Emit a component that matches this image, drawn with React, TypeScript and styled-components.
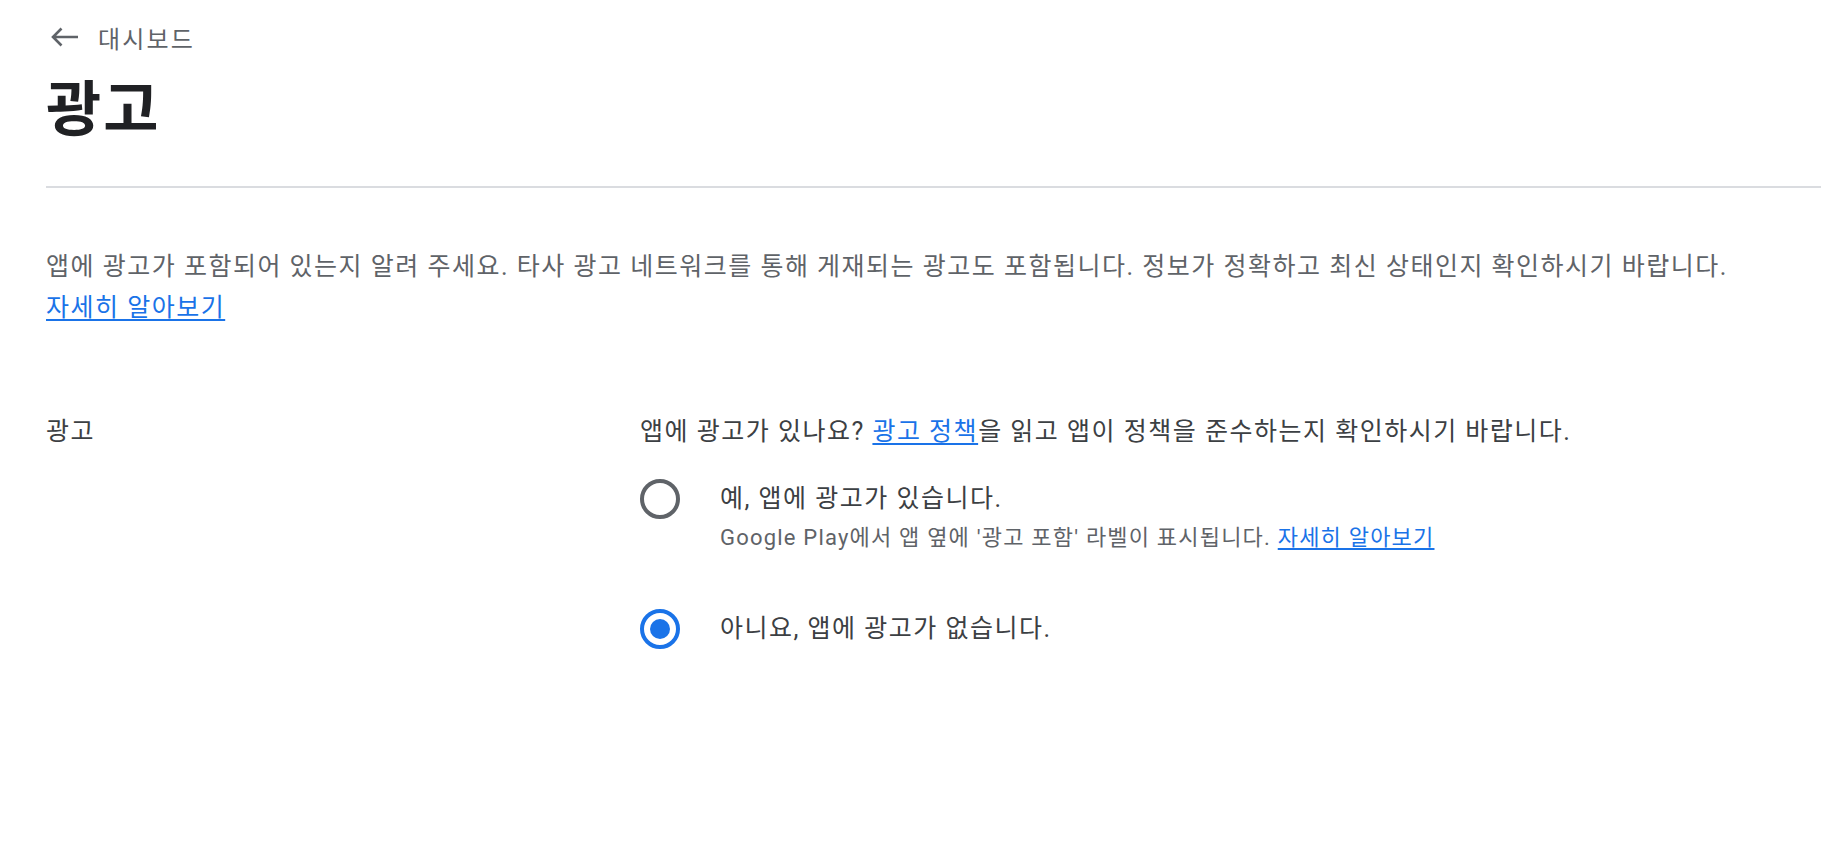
import React from "react";
import styled, { createGlobalStyle } from "styled-components";

const GlobalStyle = createGlobalStyle`
  body {
    margin: 0;
    background: #ffffff;
    font-family: Roboto, "Noto Sans CJK KR", sans-serif;
  }
`;

const Page = styled.div`
  padding-top: 21px;
`;

const Header = styled.div`
  padding-left: 46px;
`;

const BackLink = styled.a`
  display: flex;
  align-items: center;
  gap: 18px;
  height: 32px;
  padding-left: 4px;
  color: #5f6368;
  font-size: 24px;
  letter-spacing: 2.2px;
  text-decoration: none;
  cursor: pointer;
`;

const Title = styled.h1`
  margin: 26px 0 0;
  font-size: 60px;
  line-height: 64px;
  letter-spacing: 2px;
  font-weight: 700;
  color: #202124;
`;

const Divider = styled.hr`
  margin: 43px 0 0 46px;
  border: none;
  border-top: 2px solid #dadce0;
`;

const Content = styled.div`
  padding: 0 46px;
`;

const Description = styled.p`
  margin: 58px 0 0;
  font-size: 25px;
  line-height: 41px;
  letter-spacing: 1.5px;
  color: #5f6368;
`;

const Link = styled.a`
  color: #1a73e8;
  text-decoration: underline;
  text-underline-offset: 3px;
  cursor: pointer;
`;

const Section = styled.div`
  display: grid;
  grid-template-columns: 594px 1fr;
  margin-top: 86px;
`;

const SectionLabel = styled.div`
  font-size: 25px;
  line-height: 36px;
  letter-spacing: 1.5px;
  color: #3c4043;
`;

const Question = styled.div`
  font-size: 25px;
  line-height: 36px;
  letter-spacing: 1.5px;
  color: #3c4043;
`;

const Options = styled.div`
  display: flex;
  flex-direction: column;
  gap: 58px;
  margin-top: 31px;
`;

const Option = styled.label`
  display: flex;
  align-items: flex-start;
  gap: 40px;
  cursor: pointer;
`;

const Circle = styled.span<{ $checked?: boolean }>`
  box-sizing: border-box;
  flex: none;
  width: 40px;
  height: 40px;
  margin-top: -2px;
  border-radius: 50%;
  border: 4px solid ${(p) => (p.$checked ? "#1a73e8" : "#5f6368")};
  display: flex;
  align-items: center;
  justify-content: center;

  &::after {
    content: "";
    width: 20px;
    height: 20px;
    border-radius: 50%;
    background: #1a73e8;
    display: ${(p) => (p.$checked ? "block" : "none")};
  }
`;

const OptionText = styled.div`
  display: flex;
  flex-direction: column;
  gap: 6px;
`;

const OptionLabel = styled.div`
  font-size: 25px;
  line-height: 36px;
  letter-spacing: 1.5px;
  color: #3c4043;
`;

const OptionHint = styled.div`
  font-size: 22px;
  line-height: 30px;
  letter-spacing: 1.2px;
  color: #5f6368;
`;

function BackArrow() {
  return (
    <svg width="30" height="20" viewBox="0 0 30 20" fill="none">
      <path
        d="M28 10H3M11.5 1.5L3 10l8.5 8.5"
        stroke="#5f6368"
        strokeWidth="2.6"
        strokeLinecap="butt"
      />
    </svg>
  );
}

export default function App() {
  return (
    <>
      <GlobalStyle />
      <Page>
        <Header>
          <BackLink>
            <BackArrow />
            대시보드
          </BackLink>
          <Title>광고</Title>
        </Header>
        <Divider />
        <Content>
          <Description>
            앱에 광고가 포함되어 있는지 알려 주세요. 타사 광고 네트워크를 통해 게재되는 광고도 포함됩니다. 정보가
            정확하고 최신 상태인지 확인하시기 바랍니다.
            <br />
            <Link>자세히 알아보기</Link>
          </Description>
          <Section>
            <SectionLabel>광고</SectionLabel>
            <div>
              <Question>
                앱에 광고가 있나요? <Link>광고 정책</Link>을 읽고 앱이 정책을 준수하는지 확인하시기 바랍니다.
              </Question>
              <Options>
                <Option>
                  <Circle />
                  <OptionText>
                    <OptionLabel>예, 앱에 광고가 있습니다.</OptionLabel>
                    <OptionHint>
                      Google Play에서 앱 옆에 '광고 포함' 라벨이 표시됩니다. <Link>자세히 알아보기</Link>
                    </OptionHint>
                  </OptionText>
                </Option>
                <Option>
                  <Circle $checked />
                  <OptionText>
                    <OptionLabel>아니요, 앱에 광고가 없습니다.</OptionLabel>
                  </OptionText>
                </Option>
              </Options>
            </div>
          </Section>
        </Content>
      </Page>
    </>
  );
}
